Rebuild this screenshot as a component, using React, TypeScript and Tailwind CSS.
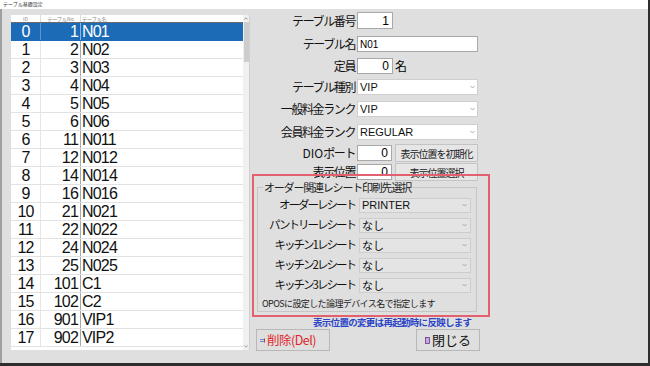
const tables: [number, number, string][] = [
  [0, 1, "N01"],
  [1, 2, "N02"],
  [2, 3, "N03"],
  [3, 4, "N04"],
  [4, 5, "N05"],
  [5, 6, "N06"],
  [6, 11, "N011"],
  [7, 12, "N012"],
  [8, 14, "N014"],
  [9, 16, "N016"],
  [10, 21, "N021"],
  [11, 22, "N022"],
  [12, 24, "N024"],
  [13, 25, "N025"],
  [14, 101, "C1"],
  [15, 102, "C2"],
  [16, 901, "VIP1"],
  [17, 902, "VIP2"],
];

const receipts: [string, string][] = [
  ["オーダーレシート", "PRINTER"],
  ["パントリーレシート", "なし"],
  ["キッチン1レシート", "なし"],
  ["キッチン2レシート", "なし"],
  ["キッチン3レシート", "なし"],
];

function Chevron() {
  return (
    <svg width="5" height="4" viewBox="0 0 5 4" className="shrink-0">
      <path d="M0.5 1 L2.5 3 L4.5 1" fill="none" stroke="#9a9a9a" strokeWidth="0.8" />
    </svg>
  );
}

function Label({ children }: { children: React.ReactNode }) {
  return (
    <div className="w-[107px] shrink-0 text-right text-[12px] leading-none tracking-[-1.4px] text-[#111] pr-[2px]">
      {children}
    </div>
  );
}

function TableList() {
  return (
    <div className="w-[239px] h-[335px] bg-white border-r border-[#d0d0d0] flex">
      <div className="w-[232px] flex flex-col">
        {/* header */}
        <div className="h-[8px] flex border-b border-[#6a6a6a] text-[5px] leading-[7px] text-[#888]">
          <div className="w-[30px] text-center border-r border-[#dcdcdc]">ID</div>
          <div className="w-[40px] text-center border-r border-[#dcdcdc]">テーブルNo</div>
          <div className="flex-1 pl-[1px]">テーブル名</div>
        </div>
        {tables.map(([id, no, name], i) => {
          const sel = i === 0;
          return (
            <div
              key={id}
              className={`h-[18px] flex items-center font-['Liberation_Sans',sans-serif] text-[16px] tracking-[-0.8px] leading-none border-b ${
                sel ? "bg-[#1c6bb7] text-white border-[#1c6bb7]" : "text-[#111] border-[#e2e2e2]"
              }`}
            >
              <div className={`w-[30px] h-full flex items-center justify-center border-r ${sel ? "border-[#5b93cb]" : "border-[#e6e6e6]"}`}>
                {id}
              </div>
              <div className={`w-[40px] h-full flex items-center justify-end pr-[2px] border-r ${sel ? "border-[#8db4dc]" : "border-[#a8a8a8]"}`}>
                {no}
              </div>
              <div className="flex-1 pl-[1px]">{name}</div>
            </div>
          );
        })}
      </div>
      {/* scrollbar */}
      <div className="w-[6px] bg-[#f0f0f0] flex flex-col items-center">
        <div className="h-[7px] w-full flex items-center justify-center">
          <svg width="4" height="3" viewBox="0 0 4 3">
            <path d="M0.5 2.5 L2 0.8 L3.5 2.5" fill="none" stroke="#888" strokeWidth="0.8" />
          </svg>
        </div>
        <div className="w-[5px] h-[40px] bg-[#cdcdcd]" />
        <div className="flex-1" />
        <div className="h-[7px] w-full flex items-center justify-center">
          <svg width="4" height="3" viewBox="0 0 4 3">
            <path d="M0.5 0.5 L2 2.2 L3.5 0.5" fill="none" stroke="#888" strokeWidth="0.8" />
          </svg>
        </div>
      </div>
    </div>
  );
}

export default function App() {
  return (
    <div className="w-[650px] h-[366px] bg-[#2e2e2e] overflow-hidden font-['Noto_Sans_CJK_JP',sans-serif]">
      <div className="w-[648px] h-[363px] bg-[#dfdfdf] flex flex-col">
        <div className="h-[9px] bg-white text-[5px] leading-[8px] pl-[3px] text-[#333]">テーブル基礎設定</div>
        <div className="flex-1 flex border-l-2 border-[#a0a0a0]">
          <div className="pl-[9px] pt-[6px]">
            <TableList />
          </div>

          <div className="relative flex-1 flex flex-col">
            <div className="mt-[3px] h-[17px] flex items-center">
              <Label>テーブル番号</Label>
              <div className="w-[36px] h-full bg-white border border-[#a8a8a8] flex items-center justify-end pr-[3px] font-['Liberation_Sans',sans-serif] text-[12px]">1</div>
            </div>
            <div className="mt-[7px] h-[16px] flex items-center">
              <Label>テーブル名</Label>
              <div className="w-[121px] h-full bg-white border border-[#a8a8a8] flex items-center pl-[2px] font-['Liberation_Sans',sans-serif] text-[10px]">N01</div>
            </div>
            <div className="mt-[6px] h-[16px] flex items-center">
              <Label>定員</Label>
              <div className="w-[36px] h-full bg-white border border-[#a8a8a8] flex items-center justify-end pr-[3px] font-['Liberation_Sans',sans-serif] text-[12px]">0</div>
              <span className="ml-[2px] text-[12px] leading-none">名</span>
            </div>
            {[
              ["テーブル種別", "VIP"],
              ["一般料金ランク", "VIP"],
              ["会員料金ランク", "REGULAR"],
            ].map(([l, v], i) => (
              <div key={l} className={`${i === 0 ? "mt-[5px]" : i === 1 ? "mt-[6px]" : "mt-[7px]"} h-[16px] flex items-center`}>
                <Label>{l}</Label>
                <div className="w-[121px] h-full bg-white border border-[#cfcfcf] flex items-center justify-between pl-[2px] pr-[2px] font-['Liberation_Sans',sans-serif] text-[11px] text-[#111]">
                  <span>{v}</span>
                  <Chevron />
                </div>
              </div>
            ))}
            {[
              [<><span className="tracking-normal text-[12px]">DIO</span>ポート</>, "表示位置を初期化", "mt-[4px]"],
              ["表示位置", "表示位置選択", "mt-[1px]"],
            ].map(([l, b, m], i) => (
              <div key={i} className={`${m as string} h-[18px] flex items-center`}>
                <Label>{l}</Label>
                <div className="w-[35px] h-[16px] bg-white border border-[#a8a8a8] flex items-center justify-end pr-[3px] font-['Liberation_Sans',sans-serif] text-[12px]">0</div>
                <div className="ml-[3px] w-[83px] h-full bg-[#e6e6e6] border border-[#c4c4c4] flex items-center justify-center text-[10px] tracking-[-1px] text-[#222]">
                  {b}
                </div>
              </div>
            ))}

            <fieldset className="ml-[7px] w-[220px] border border-[#c6c6c6] pl-[1px] pb-[1px]">
              <legend className="ml-[4px] px-[1px] text-[11px] leading-[12px] tracking-[-1.2px] text-[#222]">
                オーダー関連レシート印刷先選択
              </legend>
              <div className="mt-[2px] flex flex-col">
                {receipts.map(([l, v]) => (
                  <div key={l} className="h-[20px] flex items-center">
                    <div className="w-[97px] shrink-0 text-right text-[11.5px] leading-none tracking-[-2px] text-[#111] pr-[1px]">{l}</div>
                    <div className="ml-[3px] w-[112px] h-[15px] bg-[#e4e4e4] border border-[#cdcdcd] flex items-center justify-between pl-[2px] pr-[3px] text-[11px] text-[#111]">
                      <span className={v === "PRINTER" ? "font-['Liberation_Sans',sans-serif]" : ""}>{v}</span>
                      <Chevron />
                    </div>
                  </div>
                ))}
              </div>
              <div className="mt-[3px] h-[12px] pl-[3px] text-[9px] leading-[12px] tracking-[-0.6px] text-[#222]">
                OPOSに設定した論理デバイス名で指定します
              </div>
            </fieldset>

            <div className="mt-[5px] pl-[63px] h-[10px] text-[9.5px] leading-[10px] tracking-[-0.7px] font-bold text-[#2b45c8]">
              表示位置の変更は再起動時に反映します
            </div>

            <div className="mt-[2px] h-[22px] flex">
              <div className="ml-[6px] w-[74px] h-full border border-[#b8b8b8] flex items-center pl-[3px] text-[12.5px] tracking-[-0.5px] text-[#e0262a]">
                <svg width="6" height="5" viewBox="0 0 6 5" className="mr-[1px]">
                  <path d="M0 1.5 H4 M0 3.5 H4" stroke="#4a6fd0" strokeWidth="0.8" />
                  <path d="M4.5 0.5 V4.5" stroke="#d03030" strokeWidth="1" />
                </svg>
                削除(Del)
              </div>
              <div className="ml-[86px] w-[64px] h-full border border-[#b8b8b8] flex items-center justify-center text-[13px] text-[#111]">
                <svg width="5" height="7" viewBox="0 0 5 7" className="mr-[2px]">
                  <rect x="0.5" y="0.5" width="4" height="6" fill="#c8a6d8" stroke="#6a3a8a" strokeWidth="0.8" />
                </svg>
                閉じる
              </div>
            </div>

            {/* red annotation box */}
            <div className="absolute left-[2px] top-[165px] w-[238px] h-[143px] border-2 border-[#e3606f]" />
          </div>
        </div>
      </div>
    </div>
  );
}
